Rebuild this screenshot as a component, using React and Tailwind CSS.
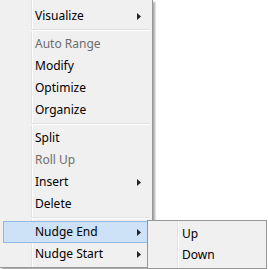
import React from 'react';

const mainItems = [
  { label: 'Visualize', sub: true },
  { sep: true },
  { label: 'Auto Range', disabled: true },
  { label: 'Modify' },
  { label: 'Optimize' },
  { label: 'Organize' },
  { sep: true },
  { label: 'Split' },
  { label: 'Roll Up', disabled: true },
  { label: 'Insert', sub: true },
  { label: 'Delete' },
  { sep: true },
  { label: 'Nudge End', sub: true, active: true },
  { label: 'Nudge Start', sub: true },
];

function Arrow() {
  return (
    <svg width="4" height="7" viewBox="0 0 4 7" className="shrink-0">
      <path d="M0 0 L4 3.5 L0 7 Z" fill="#222" />
    </svg>
  );
}

function MenuRow({ item }) {
  if (item.sep) {
    return (
      <div className="h-[6px] pl-[31px] pr-[2px] flex flex-col justify-center">
        <div className="h-px bg-[#e0e0e0]" />
        <div className="h-px bg-white" />
      </div>
    );
  }
  return (
    <div
      className={`h-[22px] ml-[3px] mr-[2px] flex items-center justify-between pl-[31px] pr-[8px] border ${
        item.active ? 'bg-[#cde2f7] border-[#90b9e8]' : 'border-transparent'
      } ${item.disabled ? 'text-[#6d6d6d]' : 'text-black'}`}
    >
      <span>{item.label}</span>
      {item.sub && <Arrow />}
    </div>
  );
}

export default function App() {
  return (
    <div
      className="relative w-[268px] h-[269px] bg-white overflow-hidden text-[12px] leading-none"
      style={{ fontFamily: '"Segoe UI", "Noto Sans", sans-serif' }}
    >
      {/* main context menu, its top and left edges are cut off */}
      <div className="w-[153px] h-[268px] flex flex-col border-r border-b border-[#979797] pt-[5px] shadow-[2px_2px_2px_rgba(0,0,0,0.35)] bg-[linear-gradient(to_right,#f0f0f0_31px,#e2e3e3_31px,#e2e3e3_32px,#ffffff_32px,#ffffff_33px,#f0f0f0_33px)]">
        {mainItems.map((item, i) => (
          <MenuRow key={i} item={item} />
        ))}
      </div>

      {/* submenu for Nudge End */}
      <div className="absolute left-[147px] top-[220px] w-[120px] h-[49px] flex flex-col border border-[#979797] py-[2px] bg-[linear-gradient(to_right,#f0f0f0_29px,#e2e3e3_29px,#e2e3e3_30px,#ffffff_30px,#ffffff_31px,#f0f0f0_31px)]">
        {['Up', 'Down'].map((l) => (
          <div key={l} className="h-[22px] flex items-center pl-[34px] text-black">
            {l}
          </div>
        ))}
      </div>
    </div>
  );
}
